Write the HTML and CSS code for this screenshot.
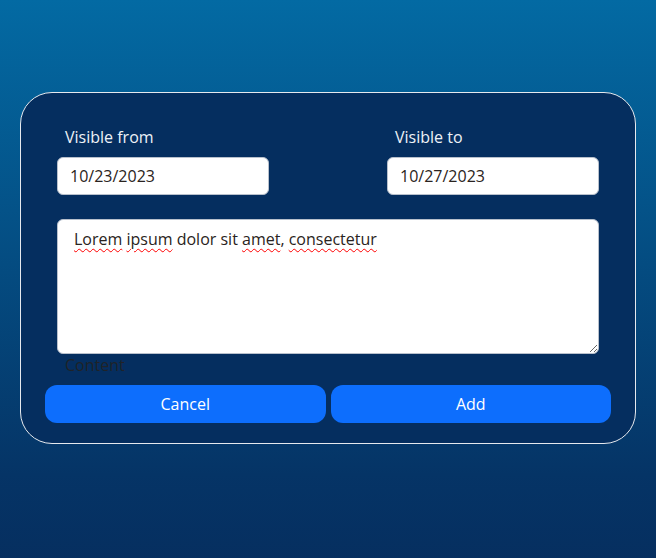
FILE: index.html
```html
<!DOCTYPE html>
<html>
<head>
<meta charset="utf-8">
<link rel="stylesheet" href="styles.css">
</head>
<body>
<div class="page">
  <form class="card">
    <div class="dates">
      <div class="field">
        <label class="label">Visible from</label>
        <div class="input">10/23/2023</div>
      </div>
      <div class="field">
        <label class="label">Visible to</label>
        <div class="input">10/27/2023</div>
      </div>
    </div>
    <div class="content">
      <div class="textarea"><span class="sp">Lorem</span> <span class="sp">ipsum</span> dolor sit <span class="sp">amet</span>, <span class="sp">consectetur</span></div>
      <div class="content-label">Content</div>
    </div>
    <div class="buttons">
      <button type="button" class="btn">Cancel</button>
      <button type="button" class="btn">Add</button>
    </div>
  </form>
</div>
</body>
</html>
```
FILE: styles.css
```css
html, body {
  margin: 0;
  padding: 0;
  height: 100%;
}
body {
  background: linear-gradient(to bottom, #036aa3 0%, #053466 85%, #062f60 100%);
  font-family: "Open Sans", "Noto Sans", sans-serif;
  font-size: 16px;
}
.page {
  padding: 92px 20px 0 20px;
}
.card {
  margin: 0;
  background: #052e5f;
  border: 1px solid #e6e9ee;
  border-radius: 32px;
  padding: 33px 24px 20px 24px;
  height: 352px;
  box-sizing: border-box;
  display: flex;
  flex-direction: column;
}
.dates {
  display: flex;
  justify-content: space-between;
  padding: 0 12px;
}
.field {
  display: flex;
  flex-direction: column;
  gap: 9px;
}
.label {
  color: #eef2f7;
  line-height: 22px;
  padding-left: 8px;
}
.input {
  width: 212px;
  height: 38px;
  box-sizing: border-box;
  background: #fff;
  border: 1px solid #b8c0cc;
  border-radius: 6px;
  padding: 0 12px;
  line-height: 36px;
  color: #2a2320;
}
.content {
  margin-top: 24px;
  padding: 0 12px;
}
.textarea {
  height: 135px;
  box-sizing: border-box;
  background: #fff;
  border: 1px solid #b8c0cc;
  border-radius: 6px;
  padding: 8px 16px;
  line-height: 22px;
  color: #2a2320;
  overflow: auto;
  resize: both;
}
.sp {
  text-decoration: underline wavy #ff0000;
  text-decoration-thickness: 1px;
  text-underline-offset: 3px;
}
.content-label {
  color: #1f2328;
  line-height: 22px;
  padding-left: 8px;
}
.buttons {
  margin-top: 9px;
  display: flex;
  gap: 5px;
}
.btn {
  flex: 1;
  height: 38px;
  border: none;
  border-radius: 12px;
  background: #0d6efd;
  color: #fff;
  font-family: "Open Sans", "Noto Sans", sans-serif;
  font-size: 16px;
}
```
